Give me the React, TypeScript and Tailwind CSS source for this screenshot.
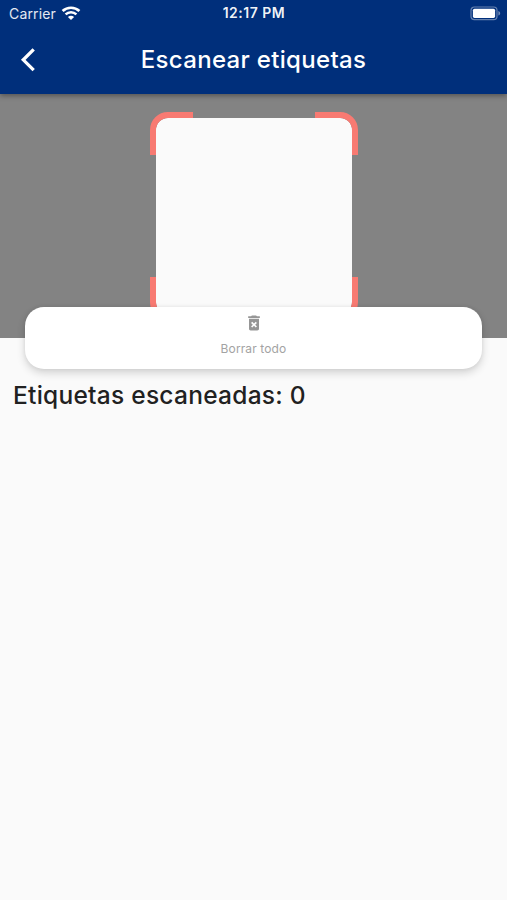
import React from 'react';

interface ActionCardProps {
  label: string;
  icon: React.ReactNode;
}

const WifiIcon: React.FC = () => (
  <svg width="20" height="14" viewBox="0 0 20 14" fill="none" stroke="white">
    <path d="M1.6 5.1C6.3 0.6 13.7 0.6 18.4 5.1" strokeWidth="2.7" />
    <path d="M4.6 8.4C7.6 5.5 12.4 5.5 15.4 8.4" strokeWidth="2.5" />
    <path d="M10 13.9L6.9 10.9C8.6 9.3 11.4 9.3 13.1 10.9Z" fill="white" stroke="none" />
  </svg>
);

const BatteryIcon: React.FC = () => (
  <svg width="31" height="15" viewBox="0 0 31 15">
    <rect x="1" y="1" width="26" height="12.6" rx="3.4" fill="none" stroke="white" strokeOpacity="0.4" strokeWidth="1.2" />
    <rect x="2.9" y="2.7" width="22.2" height="9.2" rx="1.6" fill="white" />
    <path d="M28.4 5C30.8 6 30.8 8.6 28.4 9.6Z" fill="white" fillOpacity="0.45" />
  </svg>
);

const BackIcon: React.FC = () => (
  <svg width="16" height="26" viewBox="0 0 16 26" fill="none" stroke="white" strokeWidth="3.3">
    <path d="M13.7 2.4L3.3 12.8L13.7 23.2" />
  </svg>
);

const DeleteIcon: React.FC = () => (
  <svg width="20" height="20" viewBox="0 0 24 24" fill="#969696">
    <path d="M6 19c0 1.1.9 2 2 2h8c1.1 0 2-.9 2-2V7H6v12zm2.46-7.12l1.41-1.41L12 12.59l2.12-2.12 1.41 1.41L13.41 14l2.12 2.12-1.41 1.41L12 15.41l-2.12 2.12-1.41-1.41L10.59 14l-2.13-2.12zM15.5 4l-1-1h-5l-1 1H5v2h14V4z" />
  </svg>
);

const StatusBar: React.FC = () => (
  <div className="grid h-[26px] grid-cols-3 items-center pl-[7px] pr-[6px] text-white">
    <div className="flex h-[26px] items-center gap-[5px] pl-[2px]">
      <span className="pt-[2px] text-[14px] leading-[24px] tracking-[0.15px] text-white/90">Carrier</span>
      <WifiIcon />
    </div>
    <span className="text-center text-[14px] font-semibold leading-[26px] tracking-[0.5px] text-white/95">12:17 PM</span>
    <div className="flex justify-end">
      <BatteryIcon />
    </div>
  </div>
);

const AppBar: React.FC = () => (
  <header className="relative z-20 h-[94px] bg-[#002f7b] shadow-[0_2px_5px_rgba(0,0,0,0.35)]">
    <StatusBar />
    <div className="grid h-[68px] grid-cols-[60px_1fr_60px] items-center">
      <button className="pl-[20px]" aria-label="Volver">
        <BackIcon />
      </button>
      <h1 className="whitespace-nowrap text-center text-[24px] font-medium tracking-[0.32px] text-white">
        Escanear etiquetas
      </h1>
    </div>
  </header>
);

const ScanFrame: React.FC = () => (
  <svg width="208" height="208" viewBox="0 0 208 208" fill="none">
    <rect x="6" y="6" width="196" height="196" rx="12" fill="#fafafa" />
    <g stroke="#f87a72" strokeWidth="6">
      <path d="M3 43V18A15 15 0 0 1 18 3H43" />
      <path d="M165 3H190A15 15 0 0 1 205 18V43" />
      <path d="M3 165V190A15 15 0 0 0 18 205H43" />
      <path d="M165 205H190A15 15 0 0 0 205 190V165" />
    </g>
  </svg>
);

const ActionCard: React.FC<ActionCardProps> = ({ label, icon }) => (
  <button className="flex h-[62px] w-full flex-col items-center rounded-[19px] bg-white pt-[6px] shadow-[0_4px_8px_rgba(0,0,0,0.16),0_0_4px_rgba(0,0,0,0.06)]">
    {icon}
    <span className="mt-[7px] text-[12px] leading-[18px] tracking-[0.12px] text-[#a3a3a3]">{label}</span>
  </button>
);

export default function App() {
  const scannedCount = 0;

  return (
    <div className="h-[900px] w-[507px] overflow-hidden bg-[#fafafa] font-['Inter',sans-serif]">
      <AppBar />

      {/* Camera area */}
      <section className="relative flex h-[244px] justify-center bg-[#838383] pt-[18px]">
        <ScanFrame />
        <div className="absolute inset-x-[25px] top-[213px]">
          <ActionCard label="Borrar todo" icon={<DeleteIcon />} />
        </div>
      </section>

      <main className="px-[13px] pt-[40px]">
        <h2 className="text-[24.5px] font-medium leading-[34px] tracking-[0.26px] text-[#212121]">
          Etiquetas escaneadas: {scannedCount}
        </h2>
      </main>
    </div>
  );
}
